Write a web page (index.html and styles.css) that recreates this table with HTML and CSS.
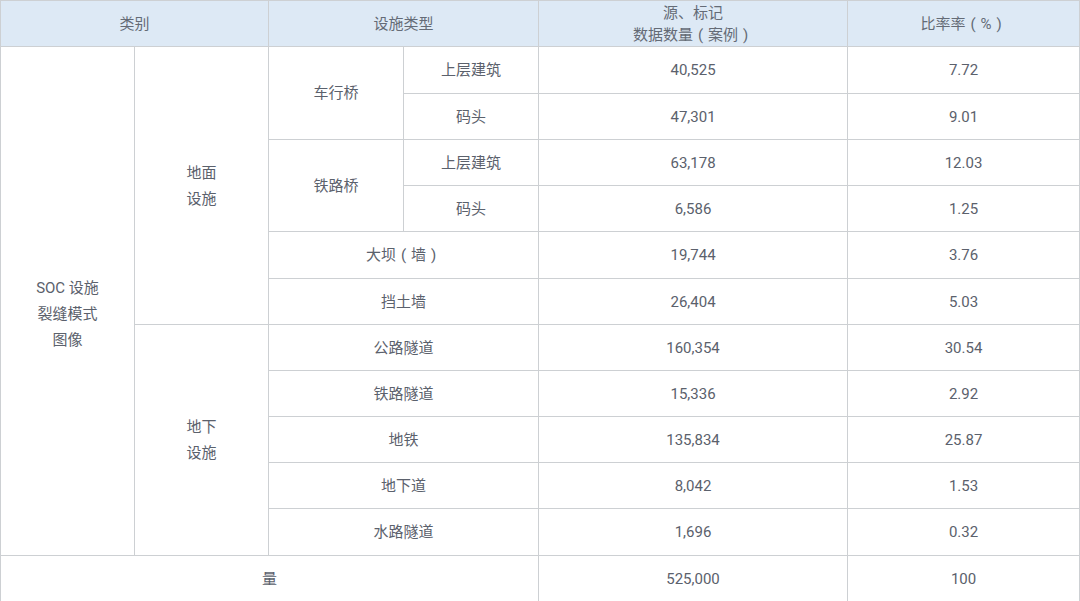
FILE: index.html
```html
<!DOCTYPE html>
<html lang="zh">
<head>
<meta charset="utf-8">
<link rel="stylesheet" href="styles.css">
</head>
<body>
<table class="data">
  <colgroup>
    <col class="c1"><col class="c2"><col class="c3"><col class="c4"><col class="c5"><col class="c6">
  </colgroup>
  <thead>
    <tr class="head">
      <th colspan="2">类别</th>
      <th colspan="2">设施类型</th>
      <th>源、标记<br>数据数量<span class="p">(</span>案例<span class="p">)</span></th>
      <th>比率率<span class="p">(</span>%<span class="p">)</span></th>
    </tr>
  </thead>
  <tbody>
    <tr class="tall">
      <td rowspan="11" class="multi soc">SOC 设施<br>裂缝模式<br>图像</td>
      <td rowspan="6" class="multi">地面<br>设施</td>
      <td rowspan="2">车行桥</td>
      <td>上层建筑</td>
      <td>40,525</td>
      <td>7.72</td>
    </tr>
    <tr><td>码头</td><td>47,301</td><td>9.01</td></tr>
    <tr><td rowspan="2">铁路桥</td><td>上层建筑</td><td>63,178</td><td>12.03</td></tr>
    <tr><td>码头</td><td>6,586</td><td>1.25</td></tr>
    <tr class="tall"><td colspan="2">大坝<span class="p">(</span>墙<span class="p">)</span></td><td>19,744</td><td>3.76</td></tr>
    <tr><td colspan="2">挡土墙</td><td>26,404</td><td>5.03</td></tr>
    <tr>
      <td rowspan="5" class="multi">地下<br>设施</td>
      <td colspan="2">公路隧道</td><td>160,354</td><td>30.54</td>
    </tr>
    <tr><td colspan="2">铁路隧道</td><td>15,336</td><td>2.92</td></tr>
    <tr><td colspan="2">地铁</td><td>135,834</td><td>25.87</td></tr>
    <tr><td colspan="2">地下道</td><td>8,042</td><td>1.53</td></tr>
    <tr class="tall"><td colspan="2">水路隧道</td><td>1,696</td><td>0.32</td></tr>
    <tr class="total"><td colspan="4" class="sum">量</td><td class="sum">525,000</td><td class="sum">100</td></tr>
  </tbody>
</table>
</body>
</html>
```

FILE: styles.css
```css
html, body {
  margin: 0;
  padding: 0;
  background: #ffffff;
}
body {
  font-family: "Roboto", "Noto Sans CJK SC", sans-serif;
  font-size: 15px;
  color: #5b616c;
  overflow: hidden;
  height: 601px;
}
.data {
  border-collapse: collapse;
  table-layout: fixed;
  width: 1079px;
}
.c1 { width: 134px; }
.c2 { width: 134px; }
.c3 { width: 135px; }
.c4 { width: 135px; }
.c5 { width: 309px; }
.c6 { width: 232px; }
.data th, .data td {
  border: 1px solid #cdd0d3;
  text-align: center;
  vertical-align: middle;
  padding: 0;
  font-weight: normal;
}
.head th {
  background: #dde9f5;
  height: 45px;
  line-height: 22px;
  color: #646b76;
}
.data tbody td {
  height: 45px;
  line-height: 22px;
}
.data tbody tr.tall td {
  height: 46px;
}
.data td.multi {
  line-height: 26px;
}
.data td.soc {
  padding-top: 25px;
}
.data tbody tr.total td.sum {
  height: 60px;
  vertical-align: top;
  padding-top: 12px;
}
.p {
  display: inline-block;
  width: 15px;
  text-align: center;
}
```
